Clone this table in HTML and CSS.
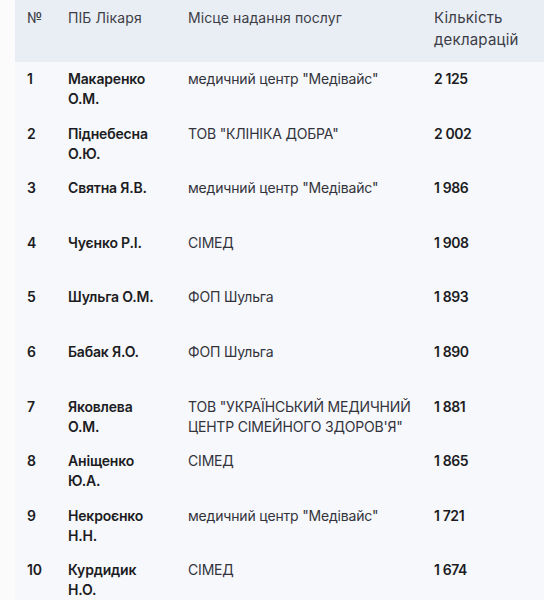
FILE: index.html
```html
<!DOCTYPE html>
<html lang="uk">
<head>
<meta charset="utf-8">
<link rel="stylesheet" href="styles.css">
</head>
<body>
<div class="wrap">
<table class="rating">
<colgroup>
<col class="c-num"><col class="c-name"><col class="c-place"><col class="c-count">
</colgroup>
<thead>
<tr><th>№</th><th>ПІБ Лікаря</th><th>Місце надання послуг</th><th>Кількість декларацій</th></tr>
</thead>
<tbody>
<tr><td class="num">1</td><td class="name">Макаренко О.М.</td><td class="place">медичний центр "Медівайс"</td><td class="count">2&nbsp;125</td></tr>
<tr><td class="num">2</td><td class="name">Піднебесна О.Ю.</td><td class="place">ТОВ "КЛІНІКА ДОБРА"</td><td class="count">2&nbsp;002</td></tr>
<tr><td class="num">3</td><td class="name">Святна Я.В.</td><td class="place">медичний центр "Медівайс"</td><td class="count">1&nbsp;986</td></tr>
<tr><td class="num">4</td><td class="name">Чуєнко Р.І.</td><td class="place">СІМЕД</td><td class="count">1&nbsp;908</td></tr>
<tr><td class="num">5</td><td class="name">Шульга О.М.</td><td class="place">ФОП Шульга</td><td class="count">1&nbsp;893</td></tr>
<tr><td class="num">6</td><td class="name">Бабак Я.О.</td><td class="place">ФОП Шульга</td><td class="count">1&nbsp;890</td></tr>
<tr><td class="num">7</td><td class="name">Яковлева О.М.</td><td class="place">ТОВ "УКРАЇНСЬКИЙ МЕДИЧНИЙ ЦЕНТР СІМЕЙНОГО ЗДОРОВ'Я"</td><td class="count">1&nbsp;881</td></tr>
<tr><td class="num">8</td><td class="name">Аніщенко Ю.А.</td><td class="place">СІМЕД</td><td class="count">1&nbsp;865</td></tr>
<tr><td class="num">9</td><td class="name">Некроєнко Н.Н.</td><td class="place">медичний центр "Медівайс"</td><td class="count">1&nbsp;721</td></tr>
<tr><td class="num">10</td><td class="name">Курдидик Н.О.</td><td class="place">СІМЕД</td><td class="count">1&nbsp;674</td></tr>
</tbody>
</table>
</div>
</body>
</html>
```

FILE: styles.css
```css
html, body {
  margin: 0;
  padding: 0;
  background: #fbfbfc;
}
body {
  font-family: Inter, "Noto Sans", sans-serif;
  color: #222;
}
.wrap {
  padding-left: 15px;
}
.rating {
  width: 529px;
  border-collapse: collapse;
  table-layout: fixed;
  background: #f6f8fc;
}
.c-num { width: 41px; }
.c-name { width: 120px; }
.c-place { width: 246px; }
.c-count { width: 122px; }
.rating th {
  background: #e9eef5;
  font-weight: 400;
  font-size: 14px;
  letter-spacing: 0.1px;
  line-height: 22px;
  color: #3d3d46;
  text-align: left;
  vertical-align: top;
  padding: 7px 12px 11px 12px;
  height: 62px;
  box-sizing: border-box;
}
.rating th:last-child {
  font-size: 15px;
  letter-spacing: 0.2px;
}
.rating td {
  font-size: 14px;
  letter-spacing: -0.18px;
  line-height: 20px;
  vertical-align: top;
  text-align: left;
  padding: 7px 12px 0 12px;
  height: 54.6px;
  box-sizing: border-box;
}
.rating td.num,
.rating td.name,
.rating td.count {
  font-weight: 600;
  color: #1c1c22;
}
.rating td.count {
  white-space: nowrap;
  letter-spacing: -0.4px;
}
.rating td.place {
  color: #33333b;
  padding-right: 0;
}
```
